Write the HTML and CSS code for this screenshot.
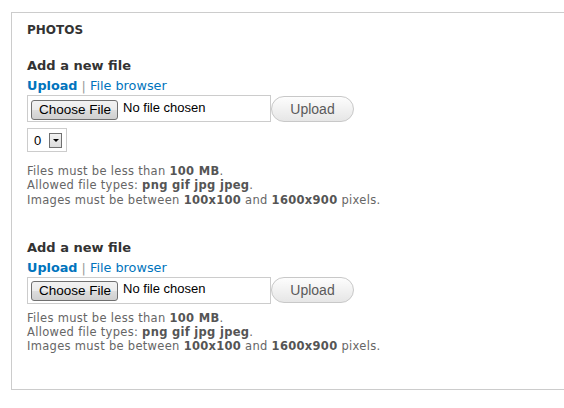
FILE: index.html
```html
<!DOCTYPE html>
<html>
<head>
<meta charset="utf-8">
<link rel="stylesheet" href="styles.css">
</head>
<body>
<div class="fieldset">
  <div class="legend">PHOTOS</div>

  <div class="item">
    <div class="label">Add a new file</div>
    <div class="tabs"><a class="active">Upload</a> <span class="sep">|</span> <a>File browser</a></div>
    <div class="row">
      <div class="file"><span class="choose">Choose File</span><span class="nofile">No file chosen</span></div>
      <span class="upload">Upload</span>
    </div>
    <div class="select"><span class="val">0</span><span class="arrow"></span></div>
    <div class="desc">
      Files must be less than <b>100 MB</b>.<br>
      Allowed file types: <b>png gif jpg jpeg</b>.<br>
      Images must be between <b>100x100</b> and <b>1600x900</b> pixels.
    </div>
  </div>

  <div class="item second">
    <div class="label">Add a new file</div>
    <div class="tabs"><a class="active">Upload</a> <span class="sep">|</span> <a>File browser</a></div>
    <div class="row">
      <div class="file"><span class="choose">Choose File</span><span class="nofile">No file chosen</span></div>
      <span class="upload">Upload</span>
    </div>
    <div class="desc tight">
      Files must be less than <b>100 MB</b>.<br>
      Allowed file types: <b>png gif jpg jpeg</b>.<br>
      Images must be between <b>100x100</b> and <b>1600x900</b> pixels.
    </div>
  </div>
</div>
</body>
</html>
```
FILE: styles.css
```css
html, body {
  margin: 0;
  padding: 0;
  background: #fff;
  overflow: hidden;
}
body {
  width: 564px;
  height: 408px;
  font-family: "DejaVu Sans", Verdana, sans-serif;
  color: #333;
}
.fieldset {
  margin: 12px 0 0 11px;
  width: 537px;
  height: 376px;
  border: 1px solid #ccc;
  border-right: none;
  padding: 0 0 0 15px;
  box-sizing: content-box;
}
.legend {
  font-size: 12px;
  font-weight: bold;
  line-height: 14px;
  margin-top: 10px;
  color: #333;
}
.item {
  margin-top: 21px;
}
.item.second {
  margin-top: 33px;
}
.label {
  font-size: 13px;
  font-weight: bold;
  line-height: 16px;
  color: #333;
}
.tabs {
  font-size: 12.8px;
  line-height: 16px;
  margin-top: 4px;
  color: #0074bd;
}
.tabs a.active { font-weight: bold; }
.tabs .sep { color: #999; }
.row {
  display: flex;
  align-items: center;
  margin-top: 1px;
}
.file {
  width: 239px;
  height: 25px;
  border: 1px solid #ccc;
  display: flex;
  align-items: center;
  padding-left: 3px;
  font-family: "Liberation Sans", Arial, sans-serif;
  font-size: 13px;
}
.choose {
  display: inline-block;
  height: 18px;
  line-height: 18px;
  padding: 0 6px 0 7px;
  border: 1px solid #707070;
  border-radius: 3px;
  background: linear-gradient(#f2f2f2, #ebebeb 50%, #dddddd 51%, #cfcfcf);
  color: #000;
  font-size: 13.5px;
  margin-top: 2px;
}
.nofile {
  margin-left: 5px;
  color: #000;
  margin-top: -3px;
}
.upload {
  margin-left: 0;
  width: 81px;
  height: 24px;
  border: 1px solid #c8c8c8;
  border-radius: 13px;
  background: linear-gradient(#fdfdfd, #e6e6e6);
  color: #5a5a5a;
  font-family: "Liberation Sans", Arial, sans-serif;
  font-size: 14px;
  display: flex;
  align-items: center;
  justify-content: center;
}
.select {
  margin-top: 6px;
  width: 38px;
  height: 22px;
  border: 1px solid #ccc;
  display: flex;
  align-items: center;
  font-family: "Liberation Sans", Arial, sans-serif;
  font-size: 13px;
  color: #000;
}
.select .val { margin-left: 6px; width: 15px; }
.select .arrow {
  width: 13px;
  height: 15px;
  border: 1px solid #707070;
  background: linear-gradient(#f2f2f2, #dcdcdc);
  position: relative;
  box-sizing: border-box;
}
.select .arrow::after {
  content: "";
  position: absolute;
  left: 3px;
  top: 5px;
  border-left: 3px solid transparent;
  border-right: 3px solid transparent;
  border-top: 3px solid #000;
}
.desc {
  margin-top: 12px;
  font-size: 11.5px;
  letter-spacing: 0.3px;
  line-height: 14.3px;
  color: #666;
}
.desc b { color: #555; }
.desc.tight { margin-top: 7px; }
```
